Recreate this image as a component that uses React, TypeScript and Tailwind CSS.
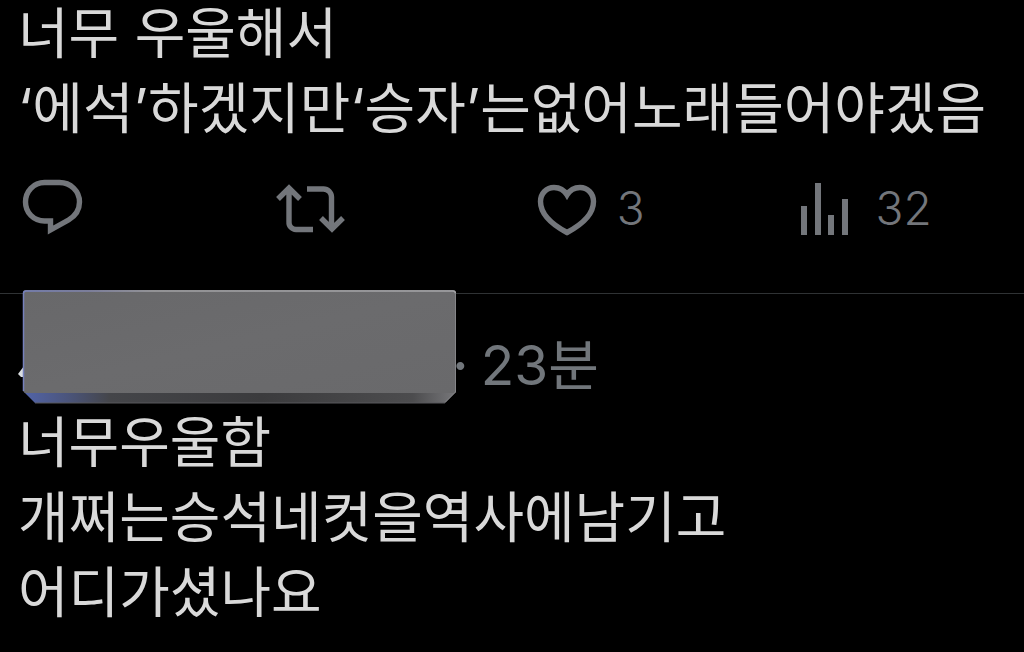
import React from 'react';

interface PostBodyProps {
  lines: string[];
}

interface ActionProps {
  label: string;
  count?: number;
  children: React.ReactNode;
}

const PostBody: React.FC<PostBodyProps> = ({ lines }) => (
  <div className="text-[55px] leading-[75px] whitespace-nowrap text-[#d9d9d9]">
    {lines.map((line) => (
      <p key={line}>{line}</p>
    ))}
  </div>
);

const Action: React.FC<ActionProps> = ({ label, count, children }) => (
  <button type="button" aria-label={label} className="flex items-center gap-5 text-[#73767b]">
    {children}
    {count !== undefined && <span className="text-[46px] leading-[60px] font-light">{count}</span>}
  </button>
);

const ReplyIcon = () => (
  <svg className="h-[60px] w-[66px]" viewBox="0 0 66 60" fill="none" stroke="currentColor" strokeWidth="5.4">
    <path d="M26.500 4.500h15C52.500 4.500 61.500 13 61.500 24c0 8-4.300 14-11 18L32.500 52V43H26.500C15.500 43 7.500 34.500 7.500 24S15.500 4.500 26.500 4.500z" />
  </svg>
);

const RepostIcon = () => (
  <svg className="h-[60px] w-[70px]" viewBox="0 0 70 60" fill="none" stroke="currentColor" strokeWidth="5.4">
    <path d="M3 21L14 10 25 21M14 11v33a7 7 0 0 0 7 7.500H38" />
    <path d="M32 11h16.500a8 8 0 0 1 8 8V51M46 40L57 51 68 40" />
  </svg>
);

const LikeIcon = () => (
  <svg className="h-[60px] w-[60px]" viewBox="0 0 60 60" fill="none" stroke="currentColor" strokeWidth="5.4">
    <path d="M30 17C26.500 11 21.500 9.500 17 9.500 9.500 9.500 3.500 15.500 3.500 23.500 3.500 35 14 46 30 54.500 46 46 56.500 35 56.500 23.500 56.500 15.500 50.500 9.500 43 9.500 38.500 9.500 33.500 11 30 17z" />
  </svg>
);

const ViewsIcon = () => (
  <svg className="h-[60px] w-[57px]" viewBox="0 0 57 60" fill="currentColor">
    <path d="M2 28h6v29H2zM16 5h6v52h-6zM29 37h6v20h-6zM43 21h6v36h-6z" />
  </svg>
);

// Metal plate laid over the author name
const NamePlate = () => (
  <svg className="h-[115px] w-[438px] shrink-0" viewBox="0 0 438 115" aria-hidden="true">
    <defs>
      <linearGradient id="face" x1="0" y1="0" x2="1" y2="1">
        <stop offset="0" stopColor="#68686a" />
        <stop offset="0.5" stopColor="#6b6b6d" />
        <stop offset="1" stopColor="#69696b" />
      </linearGradient>
      <linearGradient id="bevel">
        <stop offset="0" stopColor="#5264a8" />
        <stop offset="0.1" stopColor="#4b557c" />
        <stop offset="0.2" stopColor="#444549" />
        <stop offset="0.55" stopColor="#3b3b3d" />
        <stop offset="0.9" stopColor="#4c4c4e" />
        <stop offset="1" stopColor="#77777a" />
      </linearGradient>
      <linearGradient id="rim">
        <stop offset="0" stopColor="#7681bd" />
        <stop offset="0.15" stopColor="#8184a9" />
        <stop offset="0.3" stopColor="#a0a0a3" />
        <stop offset="1" stopColor="#a5a5a8" />
      </linearGradient>
    </defs>
    <path d="M0 84l6-8v11H3z" fill="#d9dde0" />
    <path d="M6 102H438L427 113H17z" fill="url(#bevel)" />
    <path d="M5 3q0-3 3-3H435q3 0 3 3V102L436 103H7L5 101z" fill="url(#face)" />
    <path d="M5.500 101V3.500Q5.500 1 8 1H435q2.500 0 2.500 2.500" fill="none" stroke="url(#rim)" strokeWidth="1.5" />
    <path d="M437.500 3V102L427 112.500" fill="none" stroke="#858588" />
    <path d="M17 113H427" stroke="#59595c" />
  </svg>
);

const App: React.FC = () => (
  <main className="min-h-screen overflow-hidden bg-black font-['Inter','Noto_Sans_CJK_KR',sans-serif]">
    <article className="-mt-1 border-b border-[#2f3234] px-[18px] pb-[55px]">
      <PostBody lines={['너무 우울해서', '‘에석’하겠지만‘승자’는없어노래들어야겠음']} />
      <div className="mt-8 grid grid-cols-[52fr_53fr_53fr_42fr]">
        <Action label="답글">
          <ReplyIcon />
        </Action>
        <Action label="재게시">
          <RepostIcon />
        </Action>
        <Action label="마음에 들어요" count={3}>
          <LikeIcon />
        </Action>
        <Action label="조회수" count={32}>
          <ViewsIcon />
        </Action>
      </div>
    </article>

    <article className="-mt-1 px-[18px]">
      <header className="flex text-[55px] text-[#71767b]">
        <NamePlate />
        <time className="-ml-1 mt-[38px] flex h-[75px] gap-3 leading-[75px] whitespace-nowrap">
          <span className="font-medium">·</span>
          <span>23분</span>
        </time>
      </header>
      <PostBody lines={['너무우울함', '개쩌는승석네컷을역사에남기고', '어디가셨나요']} />
    </article>
  </main>
);

export default App;
